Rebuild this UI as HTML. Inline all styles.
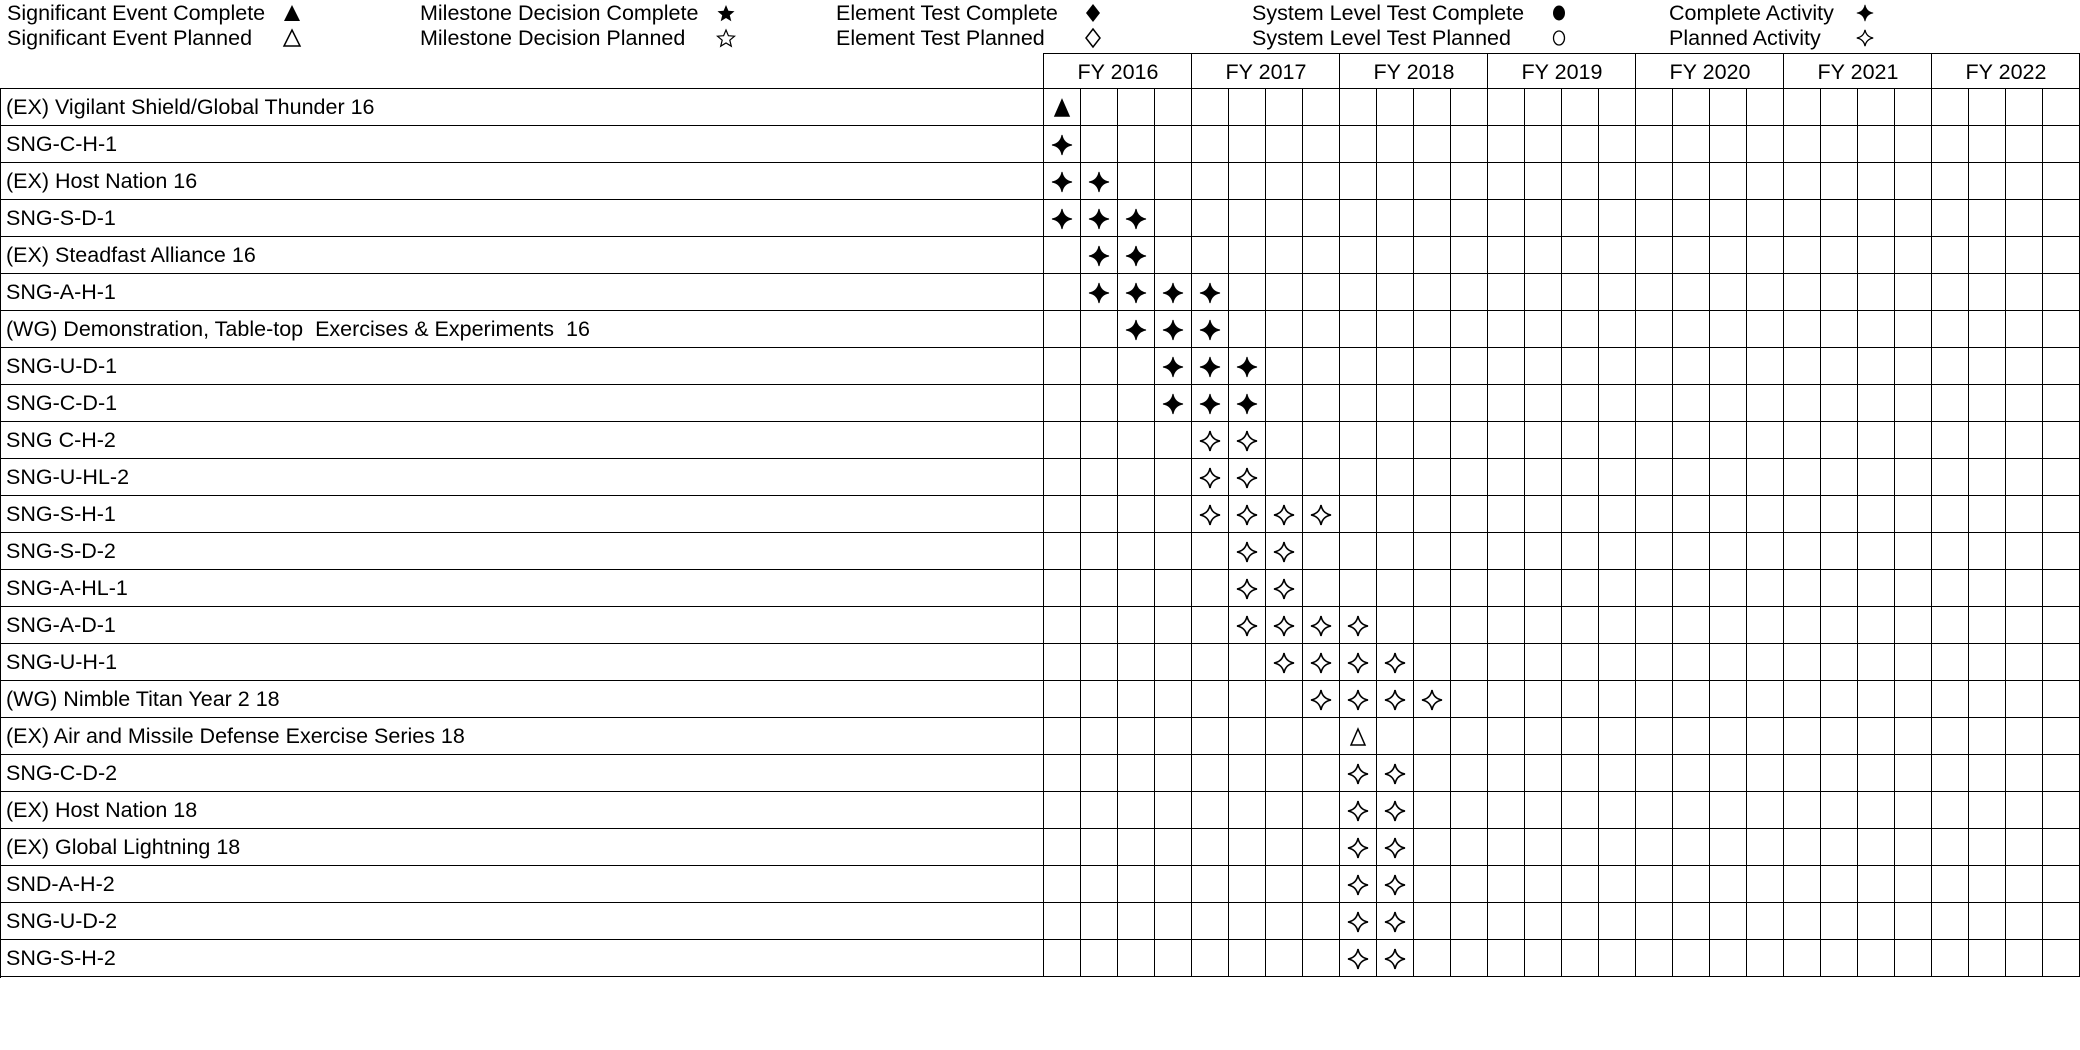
<!DOCTYPE html>
<html><head><meta charset="utf-8"><style>
body{margin:0;width:2080px;height:1050px;background:#fff;position:relative;overflow:hidden;font-family:"Liberation Sans",sans-serif;color:#000}
.lg{position:absolute;font-size:21.5px;line-height:24px;white-space:nowrap}
#hdr{position:absolute;left:1043px;top:53px;width:1035px;height:35px;border:1px solid #000;border-bottom:none;background:repeating-linear-gradient(to right,transparent 0 147px,#000 147px 148px)}
.yr{position:absolute;top:0;width:148px;height:36px;line-height:36px;text-align:center;font-size:21.5px}
#grid{position:absolute;left:0;top:88px;width:2079px;height:889px;border-top:1px solid #000;border-left:1px solid #000;
background:repeating-linear-gradient(to bottom,transparent 0 36px,#000 36px 37px)}
#vg{position:absolute;left:1043px;top:88px;width:1037px;height:889px;background:repeating-linear-gradient(to right,#000 0 1px,transparent 1px 37px)}
.lab{position:absolute;left:6px;font-size:21.5px;line-height:37px;white-space:nowrap}
svg.s{position:absolute;width:22px;height:22px}
</style></head><body>
<div class="lg" style="left:7px;top:1px">Significant Event Complete</div>
<div class="lg" style="left:7px;top:26px">Significant Event Planned</div>
<div class="lg" style="left:420px;top:1px">Milestone Decision Complete</div>
<div class="lg" style="left:420px;top:26px">Milestone Decision Planned</div>
<div class="lg" style="left:836px;top:1px">Element Test Complete</div>
<div class="lg" style="left:836px;top:26px">Element Test Planned</div>
<div class="lg" style="left:1252px;top:1px">System Level Test Complete</div>
<div class="lg" style="left:1252px;top:26px">System Level Test Planned</div>
<div class="lg" style="left:1669px;top:1px">Complete Activity</div>
<div class="lg" style="left:1669px;top:26px">Planned Activity</div>
<svg style="position:absolute;left:0;top:0" width="2080" height="52">
<path d="M292 5 L300 21 L284 21Z" fill="#000"/>
<path d="M292 30 L300 46 L284 46Z" fill="#fff" stroke="#000" stroke-width="1.5"/>
<path d="M726 5 L728.4 10.7 L734.5 11.2 L729.8 15.2 L731.3 21.2 L726 18 L720.7 21.2 L722.2 15.2 L717.5 11.2 L723.6 10.7Z" fill="#000"/>
<path d="M726 30 L728.4 35.7 L734.5 36.2 L729.8 40.2 L731.3 46.2 L726 43 L720.7 46.2 L722.2 40.2 L717.5 36.2 L723.6 35.7Z" fill="#fff" stroke="#000" stroke-width="1.2"/>
<path d="M1093 4 L1100 13 L1093 22 L1086 13Z" fill="#000"/>
<path d="M1093 29 L1100 38 L1093 47 L1086 38Z" fill="#fff" stroke="#000" stroke-width="1.5"/>
<ellipse cx="1559" cy="13" rx="6" ry="7.5" fill="#000"/>
<ellipse cx="1559" cy="38" rx="5.5" ry="7" fill="#fff" stroke="#000" stroke-width="1.3"/>
</svg>
<div id="hdr">
<div class="yr" style="left:0">FY 2016</div><div class="yr" style="left:148px">FY 2017</div><div class="yr" style="left:296px">FY 2018</div><div class="yr" style="left:444px">FY 2019</div><div class="yr" style="left:592px">FY 2020</div><div class="yr" style="left:740px">FY 2021</div><div class="yr" style="left:888px">FY 2022</div>
</div>
<div id="grid"></div><div id="vg"></div>
<div class="lab" style="top:89px">(EX) Vigilant Shield/Global Thunder 16</div>
<div class="lab" style="top:126px">SNG-C-H-1</div>
<div class="lab" style="top:163px">(EX) Host Nation 16</div>
<div class="lab" style="top:200px">SNG-S-D-1</div>
<div class="lab" style="top:237px">(EX) Steadfast Alliance 16</div>
<div class="lab" style="top:274px">SNG-A-H-1</div>
<div class="lab" style="top:311px">(WG) Demonstration, Table-top&nbsp; Exercises &amp; Experiments&nbsp; 16</div>
<div class="lab" style="top:348px">SNG-U-D-1</div>
<div class="lab" style="top:385px">SNG-C-D-1</div>
<div class="lab" style="top:422px">SNG C-H-2</div>
<div class="lab" style="top:459px">SNG-U-HL-2</div>
<div class="lab" style="top:496px">SNG-S-H-1</div>
<div class="lab" style="top:533px">SNG-S-D-2</div>
<div class="lab" style="top:570px">SNG-A-HL-1</div>
<div class="lab" style="top:607px">SNG-A-D-1</div>
<div class="lab" style="top:644px">SNG-U-H-1</div>
<div class="lab" style="top:681px">(WG) Nimble Titan Year 2 18</div>
<div class="lab" style="top:718px">(EX) Air and Missile Defense Exercise Series 18</div>
<div class="lab" style="top:755px">SNG-C-D-2</div>
<div class="lab" style="top:792px">(EX) Host Nation 18</div>
<div class="lab" style="top:829px">(EX) Global Lightning 18</div>
<div class="lab" style="top:866px">SND-A-H-2</div>
<div class="lab" style="top:903px">SNG-U-D-2</div>
<div class="lab" style="top:940px">SNG-S-H-2</div>
<div id="syms"></div>
<script>
var P="M11 1 Q12.5 9.5 21 11 Q12.5 12.5 11 21 Q9.5 12.5 1 11 Q9.5 9.5 11 1Z";
function star(x,y,f,sz){sz=sz||22;return '<svg class="s" viewBox="0 0 22 22" style="left:'+(x-sz/2)+'px;top:'+(y-sz/2)+'px;width:'+sz+'px;height:'+sz+'px"><path d="'+P+'" fill="'+(f?'#000':'#fff')+'" stroke="#000" stroke-width="'+(f?1:1.6)+'"/></svg>';}
function tri(x,y,f){return '<svg class="s" viewBox="0 0 22 22" style="left:'+(x-11)+'px;top:'+(y-11)+'px"><path d="M11 3 L18 19 L4 19Z" fill="'+(f?'#000':'#fff')+'" stroke="#000" stroke-width="1.5"/></svg>';}
var R=[["T",0],["F",0],["F",0,1],["F",0,1,2],["F",1,2],["F",1,2,3,4],["F",2,3,4],["F",3,4,5],["F",3,4,5],
["O",4,5],["O",4,5],["O",4,5,6,7],["O",5,6],["O",5,6],["O",5,6,7,8],["O",6,7,8,9],["O",7,8,9,10],["t",8],
["O",8,9],["O",8,9],["O",8,9],["O",8,9],["O",8,9],["O",8,9]];
var h="";
R.forEach(function(r,i){var cy=89+37*i+18.5;for(var k=1;k<r.length;k++){var cx=1043+37*r[k]+18.5;
if(r[0]=="T")h+=tri(cx,cy,1);else if(r[0]=="t")h+=tri(cx,cy,0);else h+=star(cx,cy,r[0]=="F");}});
h+=star(1865,13,1,18)+star(1865,38,0,18);
document.getElementById("syms").innerHTML=h;
</script>
</body></html>
